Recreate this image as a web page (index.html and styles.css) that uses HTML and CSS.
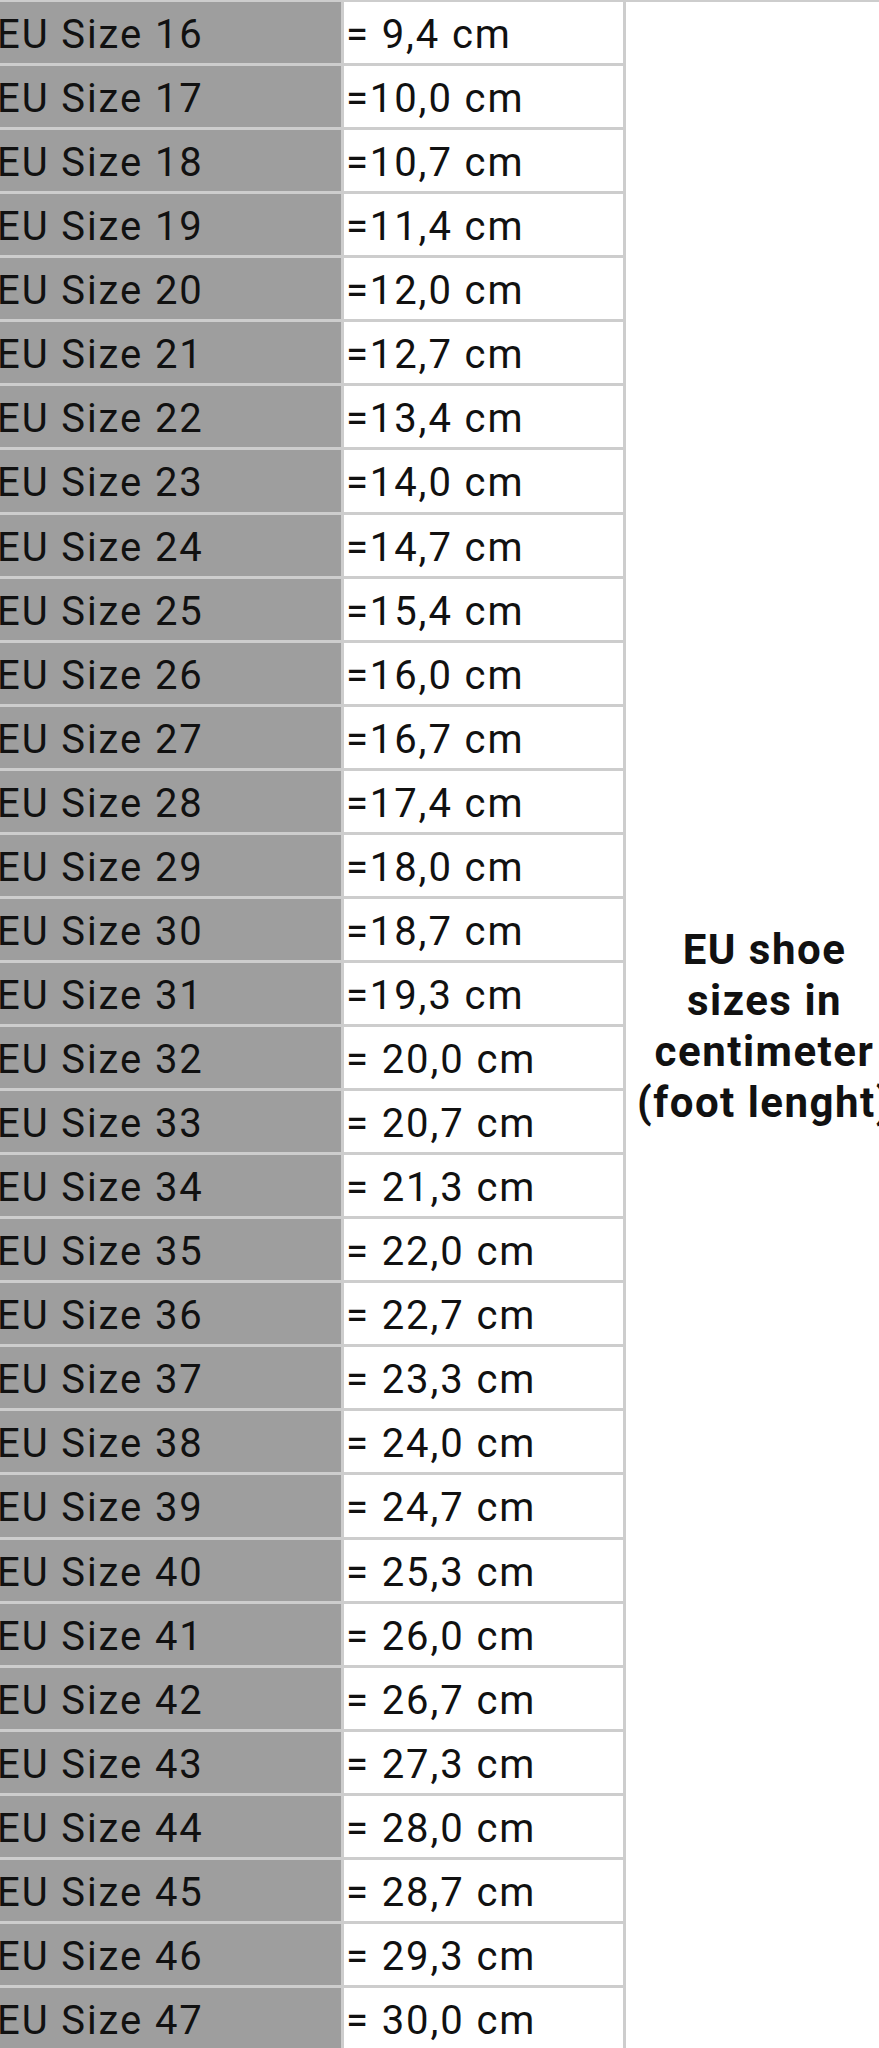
FILE: index.html
```html
<!DOCTYPE html>
<html lang="en">
<head>
<meta charset="utf-8">
<title>EU shoe sizes</title>
<link rel="stylesheet" href="styles.css">
</head>
<body>
<div class="sheet">
  <div class="note">EU shoe<br>sizes in<br>centimeter<br>(foot lenght)</div>
  <div class="size">EU Size 16</div><div class="cm">= 9,4 cm</div>
  <div class="size">EU Size 17</div><div class="cm">=10,0 cm</div>
  <div class="size">EU Size 18</div><div class="cm">=10,7 cm</div>
  <div class="size">EU Size 19</div><div class="cm">=11,4 cm</div>
  <div class="size">EU Size 20</div><div class="cm">=12,0 cm</div>
  <div class="size">EU Size 21</div><div class="cm">=12,7 cm</div>
  <div class="size">EU Size 22</div><div class="cm">=13,4 cm</div>
  <div class="size">EU Size 23</div><div class="cm">=14,0 cm</div>
  <div class="size">EU Size 24</div><div class="cm">=14,7 cm</div>
  <div class="size">EU Size 25</div><div class="cm">=15,4 cm</div>
  <div class="size">EU Size 26</div><div class="cm">=16,0 cm</div>
  <div class="size">EU Size 27</div><div class="cm">=16,7 cm</div>
  <div class="size">EU Size 28</div><div class="cm">=17,4 cm</div>
  <div class="size">EU Size 29</div><div class="cm">=18,0 cm</div>
  <div class="size">EU Size 30</div><div class="cm">=18,7 cm</div>
  <div class="size">EU Size 31</div><div class="cm">=19,3 cm</div>
  <div class="size">EU Size 32</div><div class="cm">= 20,0 cm</div>
  <div class="size">EU Size 33</div><div class="cm">= 20,7 cm</div>
  <div class="size">EU Size 34</div><div class="cm">= 21,3 cm</div>
  <div class="size">EU Size 35</div><div class="cm">= 22,0 cm</div>
  <div class="size">EU Size 36</div><div class="cm">= 22,7 cm</div>
  <div class="size">EU Size 37</div><div class="cm">= 23,3 cm</div>
  <div class="size">EU Size 38</div><div class="cm">= 24,0 cm</div>
  <div class="size">EU Size 39</div><div class="cm">= 24,7 cm</div>
  <div class="size">EU Size 40</div><div class="cm">= 25,3 cm</div>
  <div class="size">EU Size 41</div><div class="cm">= 26,0 cm</div>
  <div class="size">EU Size 42</div><div class="cm">= 26,7 cm</div>
  <div class="size">EU Size 43</div><div class="cm">= 27,3 cm</div>
  <div class="size">EU Size 44</div><div class="cm">= 28,0 cm</div>
  <div class="size">EU Size 45</div><div class="cm">= 28,7 cm</div>
  <div class="size">EU Size 46</div><div class="cm">= 29,3 cm</div>
  <div class="size">EU Size 47</div><div class="cm">= 30,0 cm</div>
</div>
</body>
</html>
```

FILE: styles.css
```css
html, body {
  margin: 0;
  padding: 0;
  overflow: hidden;
  background: #ffffff;
}

body {
  width: 879px;
  height: 2048px;
  font-family: Roboto, "Liberation Sans", Arial, sans-serif;
  color: #111111;
}

.sheet {
  display: grid;
  grid-template-columns: 346px 279px 277px;
  grid-template-rows: repeat(32, 61.07px);
  gap: 3px;
  padding: 3px;
  width: max-content;
  margin: -1px 0 0 -8px;
  background: #cdcdcd;
}

.size,
.cm {
  font-size: 40px;
  line-height: 61px;
  letter-spacing: 1.9px;
  padding: 2px 0 0 2px;
  white-space: nowrap;
  overflow: hidden;
}

.size {
  background: #9e9e9e;
}

.cm {
  background: #ffffff;
}

.note {
  grid-column: 3;
  grid-row: 1 / span 32;
  background: #ffffff;
  display: flex;
  align-items: center;
  justify-content: center;
  text-align: center;
  font-weight: 700;
  font-size: 42px;
  line-height: 51px;
  letter-spacing: 1.5px;
  white-space: nowrap;
}
```
